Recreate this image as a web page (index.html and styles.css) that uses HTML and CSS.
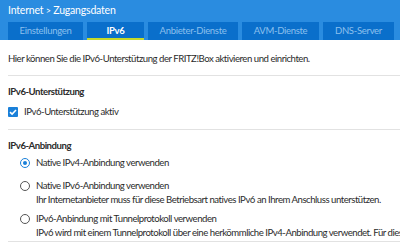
FILE: index.html
```html
<!DOCTYPE html>
<html>
  <head>
    <title>Internet &gt; Zugangsdaten</title>
    <link rel="stylesheet" href="styles.css">
  </head>
  <body>
    <div class="header">
      <div class="crumbs">Internet <span class="sep">&gt;</span> Zugangsdaten</div>
      <div class="tabs">
        <div class="tab tab-1">Einstellungen</div>
        <div class="tab tab-2 active">IPv6</div>
        <div class="tab tab-3">Anbieter-Dienste</div>
        <div class="tab tab-4">AVM-Dienste</div>
        <div class="tab tab-5">DNS-Server</div>
      </div>
    </div>

    <div class="content">
      <p class="intro">Hier können Sie die IPv6-Unterstützung der FRITZ!Box aktivieren und einrichten.</p>

      <div class="section">
        <h2>IPv6-Unterstützung</h2>
        <label class="check-row">
          <span class="checkbox">
            <svg width="10" height="10" viewBox="0 0 10 10">
              <path d="M2 5.1 L4.1 7.1 L8 2.9" fill="none" stroke="#fff" stroke-width="1.5"/>
            </svg>
          </span>
          IPv6-Unterstützung aktiv
        </label>
      </div>

      <div class="section last">
        <h2>IPv6-Anbindung</h2>
        <div class="options">
          <div class="option first">
            <span class="radio checked"></span>
            <div class="option-text">
              <div>Native IPv4-Anbindung verwenden</div>
            </div>
          </div>
          <div class="option">
            <span class="radio"></span>
            <div class="option-text">
              <div>Native IPv6-Anbindung verwenden</div>
              <div class="hint">Ihr Internetanbieter muss für diese Betriebsart natives IPv6 an Ihrem Anschluss unterstützen.</div>
            </div>
          </div>
          <div class="option">
            <span class="radio"></span>
            <div class="option-text">
              <div>IPv6-Anbindung mit Tunnelprotokoll verwenden</div>
              <div class="hint">IPv6 wird mit einem Tunnelprotokoll über eine herkömmliche IPv4-Anbindung verwendet. Für diese Betriebsart</div>
            </div>
          </div>
        </div>
      </div>
    </div>
  </body>
</html>
```

FILE: styles.css
```css
:root {
  --header-bg: #2a8ce0;
  --tab-bg: #0a6fcb;
  --tab-text: #8cc0ee;
  --accent: #c6d92b;
  --text-color: #2b2b2b;
  --line-color: #e2e2e2;
  --check-blue: #1a80d9;
}

body {
  margin: 0;
  font-family: Lato, "Noto Sans", sans-serif;
  font-size: 9.6px;
  letter-spacing: -0.48px;
  line-height: 14px;
  color: var(--text-color);
  background: #fff;
  overflow: hidden;
  white-space: nowrap;
}

.header {
  background-color: var(--header-bg);
  height: 40px;
  display: flex;
  flex-direction: column;
}

.crumbs {
  color: #fff;
  font-size: 10.5px;
  letter-spacing: -0.2px;
  line-height: 16px;
  padding: 2px 0 0 8px;
  height: 20px;
  box-sizing: border-box;
}

.crumbs .sep {
  font-size: 9px;
}

.tabs {
  display: flex;
  padding-left: 8px;
  margin-top: 2px;
  height: 18px;
}

.tab {
  background-color: var(--tab-bg);
  color: var(--tab-text);
  font-size: 9.5px;
  letter-spacing: -0.3px;
  display: flex;
  align-items: center;
  justify-content: center;
  margin-right: 4px;
  box-sizing: border-box;
}

.tab-1 { width: 75px; }
.tab-2 { width: 57px; }
.tab-3 { width: 90px; }
.tab-4 { width: 77px; }
.tab-5 { width: 71px; }

.tab.active {
  color: #fff;
  font-weight: bold;
  border-bottom: 2px solid var(--accent);
  padding-top: 2px;
}

.content {
  padding: 0 0 0 8px;
  overflow: hidden;
}

.intro {
  margin: 0;
  padding: 12px 0 9px;
  border-bottom: 1px solid var(--line-color);
}

.section {
  border-bottom: 1px solid var(--line-color);
  padding: 9px 0 10px;
}

.section.last {
  padding-bottom: 1px;
}

h2 {
  margin: 0 0 6px;
  font-size: 9.6px;
  font-weight: bold;
}

.section.last h2 {
  margin-bottom: 3px;
}

.check-row {
  display: flex;
  align-items: center;
  gap: 6px;
}

.checkbox {
  width: 10px;
  height: 10px;
  background-color: var(--check-blue);
  border-radius: 1px;
  display: flex;
}

.options {
  display: flex;
  flex-direction: column;
  gap: 5px;
  padding-left: 12px;
}

.option {
  display: flex;
  align-items: flex-start;
  gap: 6px;
}

.option.first {
  margin-bottom: 4px;
}

.radio {
  width: 8px;
  height: 8px;
  border: 1px solid #555;
  border-radius: 50%;
  margin-top: 2px;
  flex-shrink: 0;
  position: relative;
}

.radio.checked {
  border-color: var(--check-blue);
}

.radio.checked:after {
  content: "";
  position: absolute;
  left: 2px;
  top: 2px;
  width: 4px;
  height: 4px;
  border-radius: 50%;
  background-color: var(--check-blue);
}

.option-text {
  display: flex;
  flex-direction: column;
}
```
